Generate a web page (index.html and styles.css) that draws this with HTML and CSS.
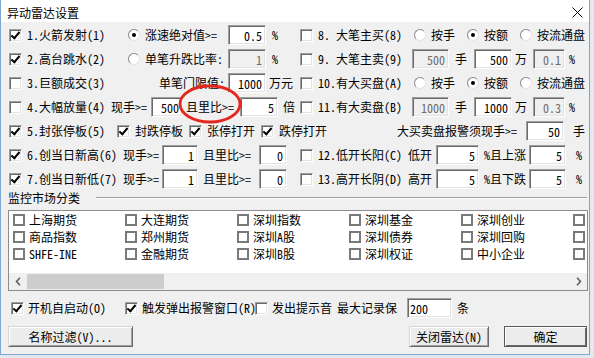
FILE: index.html
```html
<!DOCTYPE html>
<html lang="zh-CN">
<head>
  <meta charset="UTF-8">
  <title>异动雷达设置</title>
  <link rel="stylesheet" href="styles.css">
</head>
<body>
  <div class="dialog">
    <div class="titlebar">
      <span class="title">异动雷达设置</span>
      <svg class="close" width="11" height="11" viewBox="0 0 11 11"><path d="M0.5 0.5L10.5 10.5M10.5 0.5L0.5 10.5" stroke="#000" stroke-width="1"/></svg>
    </div>

    <div class="rows">
      <div class="row">
        <div class="lc">
          <span class="cb on"></span><span class="nm">1.火箭发射(1)</span>
          <span class="rd on"></span><span class="lb">涨速绝对值&gt;=</span>
          <input class="ed w38" value="0.5" readonly><span class="u">%</span>
        </div>
        <div class="rc">
          <span class="cb"></span><span class="nmr">8. 大笔主买(8)</span>
          <span class="rd"></span><span class="opt">按手</span>
          <span class="rd on"></span><span class="opt">按额</span>
          <span class="rd"></span><span>按流通盘</span>
        </div>
      </div>

      <div class="row">
        <div class="lc">
          <span class="cb on"></span><span class="nm">2.高台跳水(2)</span>
          <span class="rd"></span><span class="lb">单笔升跌比率:</span>
          <input class="ed w38 dis" value="1" readonly><span class="u">%</span>
        </div>
        <div class="rc">
          <span class="cb"></span><span class="nmr9">9. 大笔主卖(9)</span>
          <input class="ed w37 dis" value="500" readonly><span class="hand">手</span>
          <input class="ed w38" value="500" readonly><span class="wan">万</span>
          <input class="ed w32 dis" value="0.1" readonly><span class="pc">%</span>
        </div>
      </div>

      <div class="row">
        <div class="lc">
          <span class="cb"></span><span class="nm">3.巨额成交(3)</span>
          <span class="lbr">单笔门限值:</span>
          <input class="ed w38" value="1000" readonly><span class="u3">万元</span>
        </div>
        <div class="rc">
          <span class="cb"></span><span class="nmr">10.有大买盘(A)</span>
          <span class="rd"></span><span class="opt">按手</span>
          <span class="rd on"></span><span class="opt">按额</span>
          <span class="rd"></span><span>按流通盘</span>
        </div>
      </div>

      <div class="row">
        <div class="lc">
          <span class="cb"></span><span class="q4">4.大幅放量(4) 现手&gt;=</span>
          <input class="ed w32" value="500" readonly><span class="ratio">且里比&gt;=</span>
          <input class="ed w38" value="5" readonly><span class="bei">倍</span>
        </div>
        <div class="rc">
          <span class="cb"></span><span class="nmr9">11.有大卖盘(B)</span>
          <input class="ed w37 dis" value="1000" readonly><span class="hand">手</span>
          <input class="ed w38" value="1000" readonly><span class="wan">万</span>
          <input class="ed w32 dis" value="0.3" readonly><span class="pc">%</span>
        </div>
      </div>

      <div class="row">
        <div class="lc wide">
          <span class="cb on"></span><span class="nm5">5.封张停板(5)</span>
          <span class="cb on"></span><span class="sub">封跌停板</span>
          <span class="cb on"></span><span class="sub">张停打开</span>
          <span class="cb on"></span><span class="sub">跌停打开</span>
        </div>
        <div class="rc">
          <span class="alarm">大买卖盘报警须现手&gt;=</span>
          <input class="ed w38" value="50" readonly><span class="hand9">手</span>
        </div>
      </div>

      <div class="row">
        <div class="lc">
          <span class="cb on"></span><span class="q6">6.创当日新高(6) 现手&gt;=</span>
          <input class="ed w36" value="1" readonly><span class="ratio6">且里比&gt;=</span>
          <input class="ed w28" value="0" readonly>
        </div>
        <div class="rc">
          <span class="cb"></span><span class="q12">12.低开长阳(C) 低开</span>
          <input class="ed w43" value="5" readonly><span class="pct">%且上涨</span>
          <input class="ed w37" value="5" readonly><span class="pc2">%</span>
        </div>
      </div>

      <div class="row">
        <div class="lc">
          <span class="cb on"></span><span class="q6">7.创当日新低(7) 现手&gt;=</span>
          <input class="ed w36" value="1" readonly><span class="ratio6">且里比&gt;=</span>
          <input class="ed w28" value="0" readonly>
        </div>
        <div class="rc">
          <span class="cb"></span><span class="q12">13.高开长阴(D) 高开</span>
          <input class="ed w43" value="5" readonly><span class="pct">%且下跌</span>
          <input class="ed w37" value="5" readonly><span class="pc2">%</span>
        </div>
      </div>
    </div>

    <div class="group">
      <span>监控市场分类</span><span class="gline"></span>
    </div>

    <div class="listbox">
      <div class="items">
        <div class="it"><span class="lcb"></span>上海期货</div>
        <div class="it"><span class="lcb"></span>商品指数</div>
        <div class="it"><span class="lcb"></span>SHFE-INE</div>
        <div class="it"><span class="lcb"></span>大连期货</div>
        <div class="it"><span class="lcb"></span>郑州期货</div>
        <div class="it"><span class="lcb"></span>金融期货</div>
        <div class="it"><span class="lcb"></span>深圳指数</div>
        <div class="it"><span class="lcb"></span>深圳A股</div>
        <div class="it"><span class="lcb"></span>深圳B股</div>
        <div class="it"><span class="lcb"></span>深圳基金</div>
        <div class="it"><span class="lcb"></span>深圳债券</div>
        <div class="it"><span class="lcb"></span>深圳权证</div>
        <div class="it"><span class="lcb"></span>深圳创业</div>
        <div class="it"><span class="lcb"></span>深圳回购</div>
        <div class="it"><span class="lcb"></span>中小企业</div>
        <!-- next column is scrolled out of view, only its boxes show -->
        <div class="it"><span class="lcb"></span></div>
        <div class="it"><span class="lcb"></span></div>
        <div class="it"><span class="lcb"></span></div>
      </div>
      <div class="hscroll">
        <span class="arr"><svg width="6" height="9" viewBox="0 0 6 9"><path d="M5 0.8L1.5 4.5L5 8.2" fill="none" stroke="#606060" stroke-width="1.6"/></svg></span>
        <span class="track"><span class="thumb"></span></span>
        <span class="arr"><svg width="6" height="9" viewBox="0 0 6 9"><path d="M1 0.8L4.5 4.5L1 8.2" fill="none" stroke="#606060" stroke-width="1.6"/></svg></span>
      </div>
    </div>

    <div class="bottom">
      <span class="cb on"></span><span class="b1">开机自启动(O)</span>
      <span class="cb on"></span><span class="b2">触发弹出报警窗口(R)</span>
      <span class="cb"></span><span class="b3">发出提示音</span>
      <span class="b4">最大记录保</span>
      <input class="ed w45 left" value="200" readonly><span class="tiao">条</span>
    </div>

    <div class="btns">
      <button class="btn filter">名称过滤(V)...</button>
      <button class="btn close-radar">关闭雷达(N)</button>
      <button class="btn ok">确定</button>
    </div>

    <svg class="mark" width="66" height="42" viewBox="0 0 66 42"><ellipse cx="33" cy="21" rx="30" ry="18" fill="none" stroke="#e5261f" stroke-width="2.8"/></svg>
  </div>
</body>
</html>
```

FILE: styles.css
```css
* {
  box-sizing: border-box;
  margin: 0;
  padding: 0;
}

body {
  width: 594px;
  height: 358px;
  overflow: hidden;
  background-color: #e4e9ef;
  font-family: "Noto Sans Mono CJK SC", "Noto Sans CJK SC", sans-serif;
  font-size: 12px;
  line-height: 14px;
  color: #000;
  white-space: nowrap;
}

.dialog {
  position: relative;
  width: 590px;
  height: 355px;
  background-color: #f0f0f0;
  border: 1px solid #7fa6cf;
  border-top: none;
}

.titlebar {
  height: 22px;
  background-color: #fff;
  display: flex;
  align-items: center;
  justify-content: space-between;
  padding: 3px 6px 0 6px;
}

.close {
  margin-top: -1px;
}

.rows {
  padding: 1px 0 0 8px;
}

.row {
  display: flex;
  align-items: center;
  height: 24px;
}

.lc,
.rc {
  display: flex;
  align-items: center;
}

.lc {
  width: 291px;
}

.lc.wide {
  width: 388px;
}

/* classic sunken checkbox */
.cb {
  position: relative;
  flex: none;
  width: 13px;
  height: 13px;
  margin-right: 5px;
  background-color: #fff;
  border: 1px solid;
  border-color: #a0a0a0 #fff #fff #a0a0a0;
  box-shadow: inset 1px 1px #696969, inset -1px -1px #e3e3e3;
}

.cb.on::after {
  content: "";
  position: absolute;
  left: 3px;
  top: 0px;
  width: 3px;
  height: 7px;
  border: solid #000;
  border-width: 0 2px 2px 0;
  transform: rotate(40deg);
}

.rd {
  position: relative;
  flex: none;
  width: 12px;
  height: 12px;
  margin-right: 5px;
  border-radius: 50%;
  background-color: #fff;
  border: 1px solid;
  border-color: #8a8a8a #e3e3e3 #e3e3e3 #8a8a8a;
}

.rd.on::after {
  content: "";
  position: absolute;
  left: 3px;
  top: 3px;
  width: 4px;
  height: 4px;
  border-radius: 50%;
  background-color: #000;
}

.ed {
  flex: none;
  height: 20px;
  padding: 0 3px;
  font: inherit;
  color: #000;
  text-align: right;
  background-color: #fff;
  border: 1px solid;
  border-color: #a0a0a0 #fff #fff #a0a0a0;
  box-shadow: inset 1px 1px #696969, inset -1px -1px #e3e3e3;
  outline: none;
}

.ed.dis {
  background-color: #f0f0f0;
  color: #6d6d6d;
}

.ed.left {
  text-align: left;
  padding-left: 2px;
}

.w28 { width: 28px; }
.w32 { width: 32px; }
.w36 { width: 36px; }
.w37 { width: 37px; }
.w38 { width: 38px; }
.w43 { width: 43px; }
.w45 { width: 45px; }

/* left column labels */
.nm { width: 101px; }
.lb { width: 83px; }
.lbr { width: 100px; text-align: right; padding-right: 3px; }
.u { margin-left: 6px; }
.u3 { margin-left: 3px; }
.q4 { width: 124px; }
.ratio { width: 54px; margin-left: 3px; }
.bei { margin-left: 5px; }
.nm5 { width: 90px; }
.sub { width: 54px; }
.q6 { width: 135px; }
.ratio6 { width: 56px; margin-left: 5px; }

/* right column labels */
.nmr { width: 96px; }
.opt { width: 36px; }
.nmr9 { width: 94px; }
.hand { margin: 0 7px 0 6px; }
.wan { margin: 0 6px 0 3px; }
.pc { margin-left: 4px; }
.alarm { width: 129px; }
.hand9 { margin-left: 9px; }
.q12 { width: 118px; }
.pct { width: 45px; margin-left: 5px; }
.pc2 { margin-left: 10px; }

.group {
  display: flex;
  align-items: center;
  height: 14px;
  margin-left: 7px;
}

.gline {
  flex: 1;
  height: 2px;
  margin: 0 2px 0 16px;
  border-top: 1px solid #a0a0a0;
  border-bottom: 1px solid #fff;
}

.listbox {
  width: 580px;
  height: 81px;
  margin: 5px 0 0 7px;
  background-color: #fff;
  border: 1px solid #8c8c8c;
}

.items {
  height: 62px;
  padding-left: 4px;
  display: grid;
  grid-auto-flow: column;
  grid-template-rows: repeat(3, 17px);
  grid-auto-columns: 112px;
  overflow: hidden;
}

.it {
  display: flex;
  align-items: center;
}

.lcb {
  flex: none;
  width: 12px;
  height: 12px;
  margin-right: 4px;
  background-color: #fff;
  border: 2px solid #7a7a7a;
}

.hscroll {
  display: flex;
  height: 17px;
  background-color: #f0f0f0;
}

.arr {
  width: 17px;
  display: flex;
  align-items: center;
  justify-content: center;
}

.track {
  flex: 1;
  padding: 1px 0;
}

.thumb {
  display: block;
  width: 137px;
  height: 15px;
  margin-left: 1px;
  background-color: #cdcdcd;
}

.bottom {
  display: flex;
  align-items: center;
  height: 22px;
  margin-top: 6px;
  padding-left: 10px;
}

.bottom .cb {
  margin-right: 4px;
}

.b1 { width: 97px; }
.b2 { width: 113px; }
.b3 { width: 65px; }
.b4 { width: 70px; }
.tiao { margin-left: 5px; }

.btns {
  display: flex;
  height: 21px;
  margin-top: 7px;
  padding: 0 2px 0 7px;
}

.btn {
  height: 21px;
  font: inherit;
  color: #000;
  background-color: #ececec;
  border: 1px solid;
  border-color: #d4d4d4 #696969 #696969 #d4d4d4;
  box-shadow: inset 1px 1px #fff, inset -1px -1px #a0a0a0;
}

.filter { width: 125px; }

.close-radar {
  width: 80px;
  margin-left: auto;
}

.ok {
  width: 83px;
  margin-left: 15px;
  border-color: #5a5a5a;
  box-shadow: inset 1px 1px #fff, inset -1px -1px #696969;
}

/* red hand-drawn annotation */
.mark {
  position: absolute;
  left: 176px;
  top: 83px;
}
```
